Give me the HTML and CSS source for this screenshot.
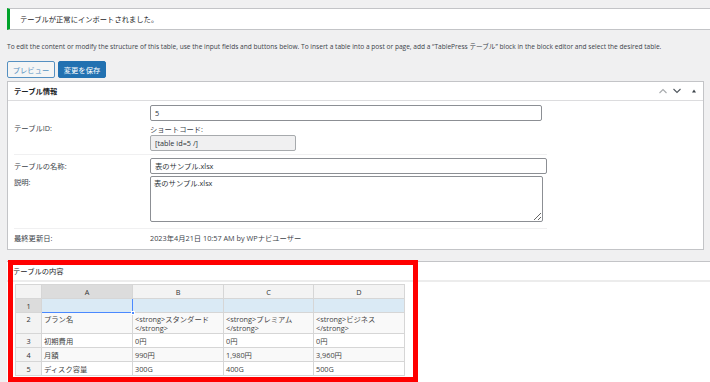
FILE: index.html
```html
<!DOCTYPE html>
<html lang="ja">
<head>
  <meta charset="UTF-8">
  <title>テーブルの編集</title>
  <link rel="stylesheet" href="styles.css">
</head>
<body>
  <div class="wrap">

    <!-- Notice -->
    <div class="notice">
      <p>テーブルが正常にインポートされました。</p>
    </div>

    <p class="intro">To edit the content or modify the structure of this table, use the input fields and buttons below. To insert a table into a post or page, add a “TablePress テーブル” block in the block editor and select the desired table.</p>

    <div class="actions">
      <button class="btn">プレビュー</button>
      <button class="btn btn-primary">変更を保存</button>
    </div>

    <!-- Table information -->
    <div class="postbox info-box">
      <div class="postbox-header">
        <h2>テーブル情報</h2>
        <div class="handle-actions">
          <span class="handle-btn">
            <svg width="8" height="6" viewBox="0 0 8 6"><polyline points="0.5,5 4,1.5 7.5,5" fill="none" stroke="#a7aaad" stroke-width="1.1"/></svg>
          </span>
          <span class="handle-btn">
            <svg width="8" height="6" viewBox="0 0 8 6"><polyline points="0.5,1 4,4.5 7.5,1" fill="none" stroke="#50575e" stroke-width="1.1"/></svg>
          </span>
          <span class="handle-btn toggle">
            <svg width="4" height="4" viewBox="0 0 4 4"><polygon points="0,3.5 2,0.5 4,3.5" fill="#3c434a"/></svg>
          </span>
        </div>
      </div>
      <div class="inside">
        <div class="field-group">
          <div class="field-label">テーブルID:</div>
          <div class="field-body">
            <input class="text-input id-input" type="text" value="5">
            <div class="sub-label">ショートコード:</div>
            <input class="text-input shortcode-input" type="text" value="[table id=5 /]" readonly>
          </div>
        </div>
        <div class="field-group group-name">
          <div class="field-label">テーブルの名称:</div>
          <div class="field-body">
            <input class="text-input name-input" type="text" value="表のサンプル.xlsx">
          </div>
          <div class="field-label label-top">説明:</div>
          <div class="field-body">
            <textarea class="text-input desc-input">表のサンプル.xlsx</textarea>
          </div>
        </div>
        <div class="field-group group-last">
          <div class="field-label">最終更新日:</div>
          <div class="field-body">2023年4月21日 10:57 AM by WPナビユーザー</div>
        </div>
      </div>
    </div>

    <!-- Table content -->
    <div class="postbox content-box">
      <div class="postbox-header">
        <h2>テーブルの内容</h2>
      </div>
      <div class="inside">
        <table class="sheet">
          <colgroup>
            <col class="col-row"><col class="col-a"><col class="col-b"><col class="col-c"><col class="col-d">
          </colgroup>
          <thead>
            <tr>
              <th class="corner"></th>
              <th class="active">A</th>
              <th>B</th>
              <th>C</th>
              <th>D</th>
            </tr>
          </thead>
          <tbody>
            <tr class="row-selected">
              <th class="active">1</th>
              <td class="current"><span class="fill-handle"></span></td>
              <td></td>
              <td></td>
              <td></td>
            </tr>
            <tr class="row-tall">
              <th>2</th>
              <td>プラン名</td>
              <td>&lt;strong&gt;スタンダード<br>&lt;/strong&gt;</td>
              <td>&lt;strong&gt;プレミアム<br>&lt;/strong&gt;</td>
              <td>&lt;strong&gt;ビジネス<br>&lt;/strong&gt;</td>
            </tr>
            <tr>
              <th>3</th>
              <td>初期費用</td>
              <td>0円</td>
              <td>0円</td>
              <td>0円</td>
            </tr>
            <tr class="row-even">
              <th>4</th>
              <td>月額</td>
              <td>990円</td>
              <td>1,980円</td>
              <td>3,960円</td>
            </tr>
            <tr>
              <th>5</th>
              <td>ディスク容量</td>
              <td>300G</td>
              <td>400G</td>
              <td>500G</td>
            </tr>
          </tbody>
        </table>
      </div>
      <div class="highlight"></div>
    </div>

  </div>
</body>
</html>
```

FILE: styles.css
```css
/* Reset */
* {
  margin: 0;
  padding: 0;
  box-sizing: border-box;
}

body {
  font-family: "Open Sans", "Noto Sans CJK JP", sans-serif;
  font-size: 7.3px;
  line-height: 10px;
  color: #3c434a;
  background-color: #f0f0f1;
  overflow: hidden;
}

.wrap {
  padding: 8px 0 0 7px;
}

/* Notice */
.notice {
  margin-right: -20px;
  height: 22px;
  display: flex;
  align-items: center;
  padding-left: 10px;
  background-color: #fff;
  border: 1px solid #c3c4c7;
  border-left: 3px solid #00a32a;
  color: #1d2327;
}

.intro {
  margin-top: 12px;
  font-size: 6.6px;
  white-space: nowrap;
  color: #3c434a;
}

/* Buttons */
.actions {
  display: flex;
  gap: 3px;
  margin-top: 9px;
}

.btn {
  width: 48px;
  height: 17px;
  font-family: inherit;
  font-size: 7.3px;
  border: 1px solid #2271b1;
  border-radius: 2px;
  background-color: #f6f7f7;
  color: #2271b1;
  opacity: 0.75;
}

.btn-primary {
  background-color: #2271b1;
  color: #fff;
  opacity: 1;
}

/* Postbox */
.postbox {
  background-color: #fff;
  border: 1px solid #c3c4c7;
}

.info-box {
  margin-top: 3px;
  width: 697px;
}

.postbox-header {
  display: flex;
  align-items: center;
  justify-content: space-between;
  height: 19px;
  padding-left: 6px;
  border-bottom: 1px solid #dcdcde;
}

.postbox-header h2 {
  font-size: 7.3px;
  font-weight: bold;
  color: #1d2327;
}

.handle-actions {
  display: flex;
  align-items: center;
  padding-right: 2px;
}

.handle-btn {
  width: 14px;
  height: 14px;
  display: flex;
  align-items: center;
  justify-content: center;
}

.handle-btn.toggle {
  margin-left: 3px;
}

/* Information form */
.info-box .inside {
  padding: 0 6px;
}

.field-group {
  display: grid;
  grid-template-columns: 136px 1fr;
  align-items: center;
  width: 533px;
  padding: 4px 0 3px;
  border-bottom: 1px solid #f0f0f1;
}

.field-label {
  color: #3c434a;
}

.label-top {
  align-self: start;
  margin-top: 1px;
}

.sub-label {
  margin-top: 3px;
}

.text-input {
  display: block;
  height: 16px;
  padding: 0 4px;
  font-family: inherit;
  font-size: 7.3px;
  color: #2c3338;
  background-color: #fff;
  border: 1px solid #8c8f94;
  border-radius: 2px;
}

.id-input {
  width: 392px;
}

.shortcode-input {
  width: 146px;
  margin-top: 1px;
  background-color: #f0f0f1;
  border-color: #a7aaad;
}

.group-name {
  row-gap: 2px;
  padding: 3px 0 6px;
}

.name-input {
  width: 397px;
}

.desc-input {
  width: 393px;
  height: 46px;
  padding: 1px 3px;
  resize: vertical;
}

.group-last {
  border-bottom: none;
  padding: 4px 0 6px;
}

/* Table content */
.content-box {
  position: relative;
  margin-top: 11px;
  margin-right: -20px;
  height: 140px;
  border-left: none;
  border-right: none;
}

.content-box .postbox-header {
  height: 20px;
  border-bottom: 2px solid #ececec;
}

.content-box .postbox-header h2 {
  font-weight: normal;
}

.content-box .inside {
  padding: 2px 0 0 8px;
}

.sheet {
  border-collapse: collapse;
  table-layout: fixed;
  width: 389px;
  color: #444;
}

.col-row { width: 26px; }
.col-a { width: 91px; }
.col-b { width: 91px; }
.col-c { width: 90px; }
.col-d { width: 91px; }

.sheet th,
.sheet td {
  height: 14px;
  border: 1px solid #d6d6d6;
  padding: 0 2px;
  font-size: 7.3px;
  line-height: 8px;
  font-weight: normal;
  text-align: left;
  vertical-align: middle;
  white-space: nowrap;
  overflow: hidden;
}

.sheet th {
  text-align: center;
  background-color: #f3f3f3;
  color: #333;
}

.sheet th.active {
  background-color: #dcdcdc;
}

.row-selected td {
  background-color: #daeaf5;
}

.sheet td.current {
  position: relative;
  border: 1.5px solid #4b89ff;
  overflow: visible;
}

.fill-handle {
  position: absolute;
  right: -3px;
  bottom: -3px;
  width: 4px;
  height: 4px;
  background-color: #4b89ff;
  border: 1px solid #fff;
}

.row-tall th,
.row-tall td {
  height: 20px;
  vertical-align: top;
  padding-top: 2px;
  line-height: 9px;
  background-color: #f9f9f9;
}

.row-tall th {
  background-color: #f3f3f3;
}

.row-even td {
  background-color: #f9f9f9;
}

/* Red annotation frame */
.highlight {
  position: absolute;
  left: 1px;
  top: -2px;
  width: 410px;
  height: 122px;
  border: 5px solid #ff0000;
  pointer-events: none;
}
```
